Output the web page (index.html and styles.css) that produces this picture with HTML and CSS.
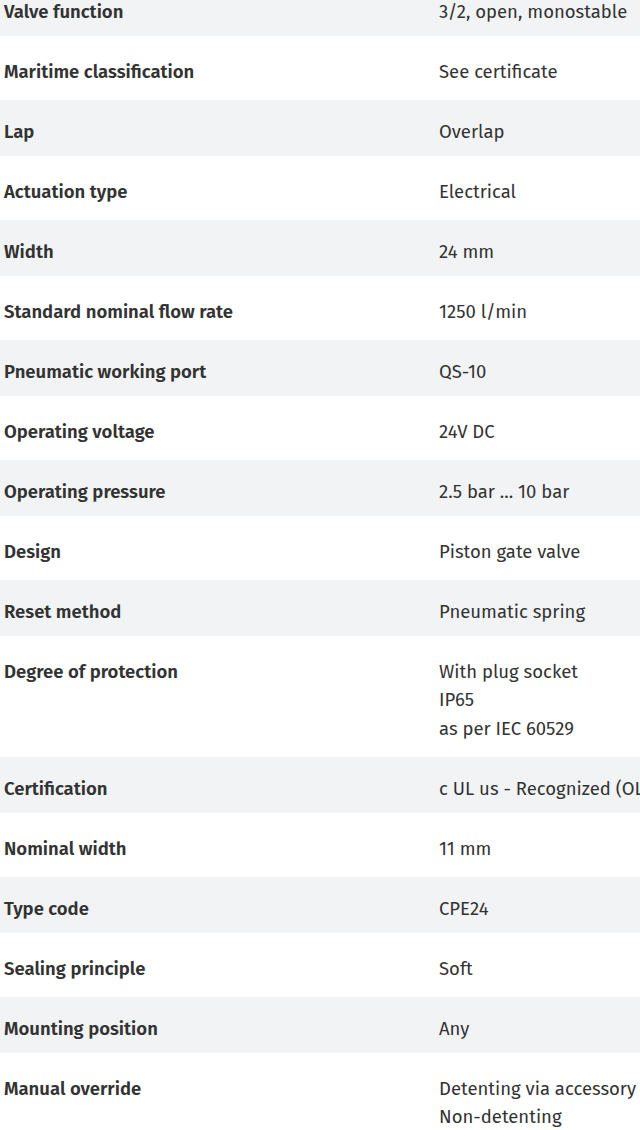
FILE: index.html
```html
<!DOCTYPE html>
<html lang="en">
<head>
<meta charset="utf-8">
<title>Technical data</title>
<link rel="stylesheet" href="styles.css">
</head>
<body>
<div class="specs">
  <div class="row alt"><div class="label">Valve function</div><div class="value">3/2, open, monostable</div></div>
  <div class="row"><div class="label">Maritime classification</div><div class="value">See certificate</div></div>
  <div class="row alt"><div class="label">Lap</div><div class="value">Overlap</div></div>
  <div class="row"><div class="label">Actuation type</div><div class="value">Electrical</div></div>
  <div class="row alt"><div class="label">Width</div><div class="value">24 mm</div></div>
  <div class="row"><div class="label">Standard nominal flow rate</div><div class="value">1250 l/min</div></div>
  <div class="row alt"><div class="label">Pneumatic working port</div><div class="value">QS-10</div></div>
  <div class="row"><div class="label">Operating voltage</div><div class="value">24V DC</div></div>
  <div class="row alt"><div class="label">Operating pressure</div><div class="value">2.5 bar ... 10 bar</div></div>
  <div class="row"><div class="label">Design</div><div class="value">Piston gate valve</div></div>
  <div class="row alt"><div class="label">Reset method</div><div class="value">Pneumatic spring</div></div>
  <div class="row"><div class="label">Degree of protection</div><div class="value">With plug socket<br>IP65<br>as per IEC 60529</div></div>
  <div class="row alt"><div class="label">Certification</div><div class="value">c UL us - Recognized (OL)</div></div>
  <div class="row"><div class="label">Nominal width</div><div class="value">11 mm</div></div>
  <div class="row alt"><div class="label">Type code</div><div class="value">CPE24</div></div>
  <div class="row"><div class="label">Sealing principle</div><div class="value">Soft</div></div>
  <div class="row alt"><div class="label">Mounting position</div><div class="value">Any</div></div>
  <div class="row"><div class="label">Manual override</div><div class="value">Detenting via accessory<br>Non-detenting</div></div>
</div>
</body>
</html>
```
FILE: styles.css
```css
html, body {
  margin: 0;
  padding: 0;
  background: #ffffff;
  overflow-x: hidden;
}
body {
  font-family: "Fira Sans", "Source Sans 3", "Liberation Sans", sans-serif;
  font-size: 18.5px;
  color: #333333;
}
.specs {
  display: flex;
  flex-direction: column;
  gap: 4px;
  margin-top: -20px;
}
.row {
  display: grid;
  grid-template-columns: 435px 1fr;
  padding: 17.5px 0 10px 4px;
  line-height: 28.5px;
  background: #ffffff;
}
.row.alt {
  background: #f2f3f5;
}
.label {
  font-weight: 600;
  color: #333333;
  white-space: nowrap;
}
.value {
  font-weight: 400;
  color: #333333;
  white-space: nowrap;
}
```
